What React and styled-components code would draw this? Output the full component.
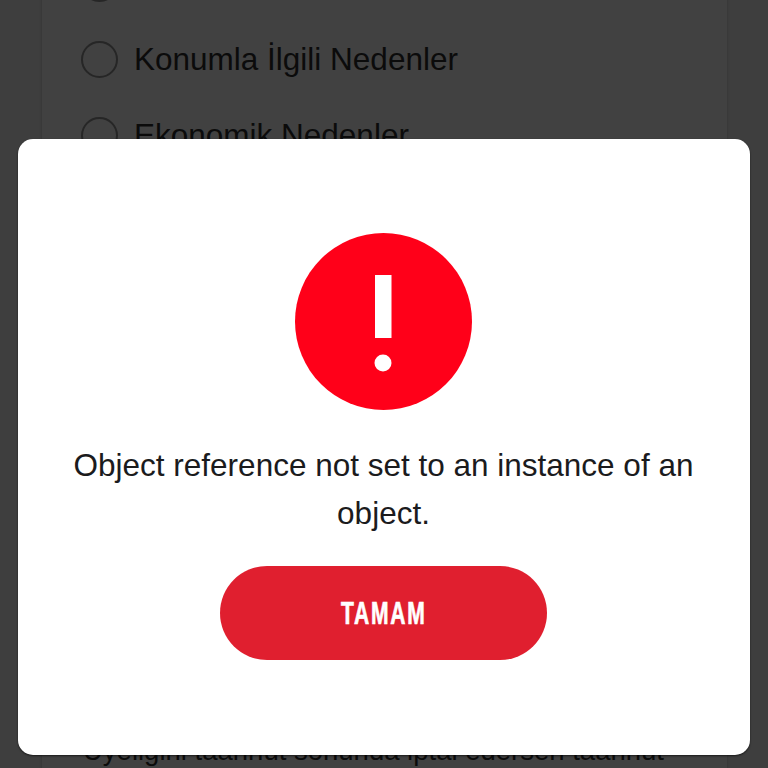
import React from "react";
import styled, { createGlobalStyle } from "styled-components";

const GlobalStyle = createGlobalStyle`
  html, body {
    margin: 0;
    padding: 0;
    background: #3e3e3e;
    font-family: "Liberation Sans", Arial, sans-serif;
  }
`;

const Page = styled.div`
  position: relative;
  width: 768px;
  height: 768px;
  overflow: hidden;
  background: #3e3e3e;
`;

const Panel = styled.div`
  box-sizing: border-box;
  display: flex;
  flex-direction: column;
  height: 840px;
  margin: -55px 41px 0 42px;
  padding: 0 39px 10px;
  background: #414141;
  box-shadow: 0 0 3px rgba(0, 0, 0, 0.18);
`;

const Option = styled.div`
  display: flex;
  align-items: center;
  gap: 16px;
  height: 76px;
  flex-shrink: 0;
`;

const Radio = styled.span`
  box-sizing: border-box;
  width: 37px;
  height: 37px;
  border: 2px solid #262626;
  border-radius: 50%;
`;

const OptionLabel = styled.span`
  font-size: 31.5px;
  color: #0b0b0b;
  white-space: nowrap;
`;

const Terms = styled.p`
  margin: auto 0 0;
  padding-left: 2px;
  font-size: 27.5px;
  line-height: 48px;
  color: #0b0b0b;
  white-space: nowrap;
`;

const Overlay = styled.div`
  position: absolute;
  inset: 0;
  box-sizing: border-box;
  display: flex;
  padding: 139px 18px 13px;
`;

const Modal = styled.div`
  flex: 1;
  display: flex;
  flex-direction: column;
  align-items: center;
  padding: 94px 1px 0 0;
  background: #fff;
  border-radius: 15px;
  box-shadow: 0 1px 2px rgba(0, 0, 0, 0.6);
`;

const Message = styled.p`
  margin: 31px 0 29px;
  width: 660px;
  font-size: 31.5px;
  line-height: 48px;
  text-align: center;
  color: #1b1b1d;
`;

const ConfirmButton = styled.button`
  width: 327px;
  height: 94px;
  padding: 2px 0 0;
  border: 0;
  border-radius: 47px;
  background: #e01f2f;
  color: #fff;
  font-family: "Liberation Sans", Arial, sans-serif;
`;

const ConfirmLabel = styled.span`
  display: inline-block;
  font-size: 31px;
  font-weight: 700;
  letter-spacing: 2.5px;
  -webkit-text-stroke: 0.7px #fff;
  transform: scaleX(0.68);
`;

const AlertIcon = () => (
  <svg width="177" height="177" viewBox="0 0 177 177" aria-hidden="true">
    <circle cx="88.5" cy="88.5" r="88.5" fill="#ff0019" />
    <rect x="80" y="42" width="16.5" height="63" fill="#fff" />
    <circle cx="88" cy="130" r="8.5" fill="#fff" />
  </svg>
);

export default function App() {
  return (
    <Page>
      <GlobalStyle />
      <Panel>
        <Option>
          <Radio />
        </Option>
        <Option>
          <Radio />
          <OptionLabel>Konumla İlgili Nedenler</OptionLabel>
        </Option>
        <Option>
          <Radio />
          <OptionLabel>Ekonomik Nedenler</OptionLabel>
        </Option>
        <Terms>Üyeliğini taahhüt sonunda iptal edersen taahhüt</Terms>
      </Panel>
      <Overlay>
        <Modal>
          <AlertIcon />
          <Message>Object reference not set to an instance of an object.</Message>
          <ConfirmButton>
            <ConfirmLabel>TAMAM</ConfirmLabel>
          </ConfirmButton>
        </Modal>
      </Overlay>
    </Page>
  );
}
